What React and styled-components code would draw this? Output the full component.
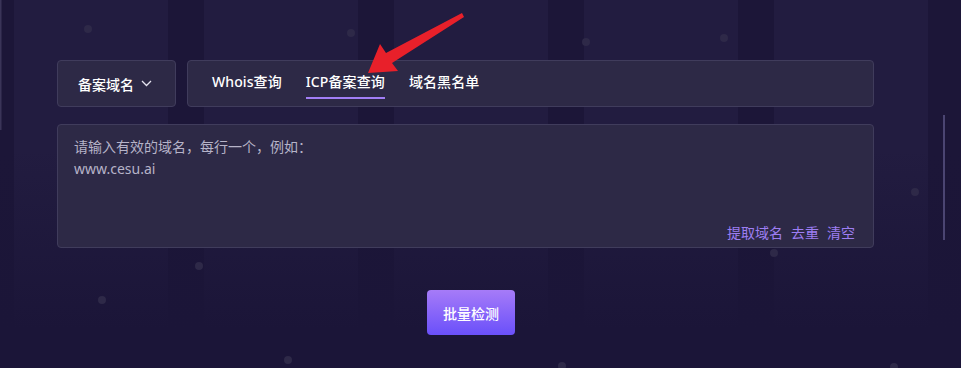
import React from "react"
import styled, { createGlobalStyle } from "styled-components"

const GlobalStyle = createGlobalStyle`
  html, body {
    margin: 0;
    padding: 0;
    background: #1b1538;
  }
  body {
    font-family: "Noto Sans", "Noto Sans CJK SC", sans-serif;
    -webkit-font-smoothing: antialiased;
  }
`

const Page = styled.div`
  position: relative;
  min-height: 368px;
  overflow: hidden;
  background-color: #1b1538;
  background-image: linear-gradient(
      to bottom,
      rgba(27, 21, 56, 0) 0px,
      rgba(27, 21, 56, 0) 150px,
      #1b1538 330px
    ),
    repeating-linear-gradient(
      90deg,
      #1c1638 0px,
      #1c1638 14px,
      #221c40 14px,
      #221c40 168px,
      #1c1638 168px,
      #1c1638 190px
    );
`

const Decor = styled.svg`
  position: absolute;
  inset: 0;
  width: 961px;
  height: 368px;
  pointer-events: none;
`

const Content = styled.div`
  position: relative;
  width: 817px;
  padding: 60px 0 0 57px;
  display: flex;
  flex-direction: column;
`

const TopRow = styled.div`
  display: flex;
  gap: 11px;
`

const Panel = styled.div`
  box-sizing: border-box;
  background: #2d2946;
  border: 1px solid #403c5c;
  border-radius: 4px;
`

const Select = styled(Panel)`
  width: 119px;
  height: 47px;
  display: flex;
  align-items: center;
  padding: 0 20px;
  gap: 7px;
  color: #ffffff;
  font-size: 14px;
  font-weight: 500;
  cursor: pointer;
`

const TabBar = styled(Panel)`
  flex: 1;
  height: 47px;
  display: flex;
  align-items: flex-start;
  padding: 0 24px;
  gap: 24px;
`

const Tab = styled.div`
  padding: 10px 0 4px;
  line-height: 22px;
  font-size: 14px;
  font-weight: 500;
  letter-spacing: 0.1px;
  color: #ffffff;
  border-bottom: 2px solid ${p => (p.$active ? "#a27ef6" : "transparent")};
  cursor: pointer;
`

const InputBox = styled(Panel)`
  margin-top: 17px;
  height: 124px;
  display: flex;
  flex-direction: column;
`

const Area = styled.textarea`
  flex: 1;
  box-sizing: border-box;
  background: transparent;
  border: none;
  outline: none;
  resize: none;
  padding: 11px 16px 0;
  font-family: "Noto Sans", "Noto Sans CJK SC", sans-serif;
  font-size: 14px;
  line-height: 22px;
  color: #e0def0;
  &::placeholder {
    color: #b6b3c8;
  }
`

const Actions = styled.div`
  display: flex;
  justify-content: flex-end;
  gap: 8px;
  padding: 0 18px 3px;
`

const ActionLink = styled.span`
  font-size: 14px;
  line-height: 22px;
  color: #9d7ef2;
  cursor: pointer;
`

const ButtonRow = styled.div`
  display: flex;
  justify-content: center;
  padding-left: 11px;
  margin-top: 42px;
`

const CheckButton = styled.button`
  width: 88px;
  height: 45px;
  border: none;
  border-radius: 4px;
  background: linear-gradient(to bottom, #a67bf8, #6a50fa);
  color: #ffffff;
  font-family: "Noto Sans", "Noto Sans CJK SC", sans-serif;
  font-size: 14px;
  font-weight: 500;
  cursor: pointer;
`

const Chevron = () => (
  <svg width="11" height="7" viewBox="0 0 11 7">
    <polyline points="1,1 5.5,5.5 10,1" fill="none" stroke="#e6e4f0" strokeWidth="1.3" />
  </svg>
)

const dots = [
  [88, 29], [351, 33], [586, 42], [724, 38], [774, 253], [915, 192],
  [199, 266], [102, 300], [288, 360], [562, 366], [894, 367],
]

export default function App() {
  return (
    <>
      <GlobalStyle />
      <Page>
        <Decor viewBox="0 0 961 368">
          <rect x="0" y="0" width="1.5" height="130" fill="#3a3458" />
          <rect x="943" y="115" width="2" height="125" fill="#4b4572" />
          {dots.map(([x, y], i) => (
            <circle key={i} cx={x} cy={y} r="4" fill="#2e2948" />
          ))}
        </Decor>
        <Content>
          <TopRow>
            <Select>
              备案域名
              <Chevron />
            </Select>
            <TabBar>
              <Tab>Whois查询</Tab>
              <Tab $active>ICP备案查询</Tab>
              <Tab>域名黑名单</Tab>
            </TabBar>
          </TopRow>
          <InputBox>
            <Area placeholder={"请输入有效的域名，每行一个，例如：\nwww.cesu.ai"} />
            <Actions>
              <ActionLink>提取域名</ActionLink>
              <ActionLink>去重</ActionLink>
              <ActionLink>清空</ActionLink>
            </Actions>
          </InputBox>
          <ButtonRow>
            <CheckButton>批量检测</CheckButton>
          </ButtonRow>
        </Content>
        <Decor viewBox="0 0 961 368">
          <polygon
            points="368,73 380,44 386,53 462,13 464,17 392,63 398,71"
            fill="#e8202a"
          />
        </Decor>
      </Page>
    </>
  )
}
